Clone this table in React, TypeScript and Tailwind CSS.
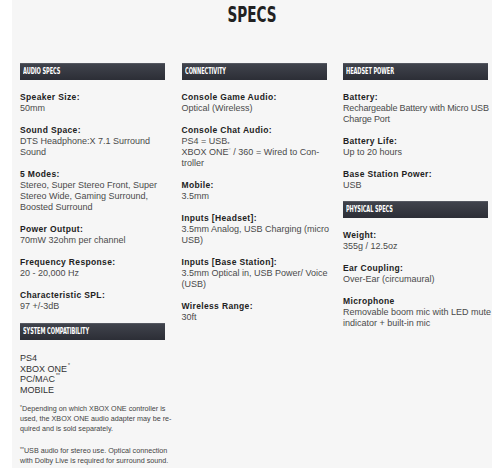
import React from "react";

const bodyFont = { fontFamily: '"Liberation Sans", Arial, sans-serif' };

function Bar({ title }: { title: string }) {
  return (
    <div className="h-[17px] w-[145px] bg-gradient-to-b from-[#40434c] to-[#2c2e36] border-t border-[#555861] flex items-center pl-[3px] overflow-hidden">
      <span
        className="inline-block origin-left scale-x-[0.7] text-white font-bold text-[8px] leading-none tracking-[-0.1px] whitespace-nowrap"
        style={{ fontFamily: '"DejaVu Sans Condensed", "DejaVu Sans", sans-serif' }}
      >
        {title}
      </span>
    </div>
  );
}

function Spec({ label, lines, tight }: { label: string; lines: React.ReactNode[]; tight?: boolean }) {
  return (
    <div className="mb-[11px]">
      <div className="text-[8.5px] leading-[11px] font-bold text-[#222] tracking-[0.35px] whitespace-nowrap">
        {label}
      </div>
      {lines.map((l, i) => (
        <div
          key={i}
          className={
            tight
              ? "text-[9px] leading-[11px] text-[#4a4a4a] whitespace-nowrap tracking-[-0.15px]"
              : "text-[9px] leading-[11px] text-[#4a4a4a] whitespace-nowrap"
          }
        >
          {l}
        </div>
      ))}
    </div>
  );
}

export default function App() {
  return (
    <div className="w-[500px] h-[474px] bg-white" style={bodyFont}>
      <div className="ml-[12px] w-[480px] h-[468px] bg-[#f6f6f6]">
        <div className="h-[63px] flex justify-center pt-[4px]">
          <div
            className="inline-block scale-x-[0.72] text-[21px] leading-[22px] font-bold text-[#222] h-[22px]"
            style={{ fontFamily: '"DejaVu Sans Condensed", "DejaVu Sans", sans-serif' }}
          >
            SPECS
          </div>
        </div>
        <div className="grid grid-cols-[145px_145px_145px] gap-x-[16.5px] pl-[8px]">
          {/* Left column */}
          <div className="flex flex-col">
            <Bar title="AUDIO SPECS" />
            <div className="h-[12px]" />
            <Spec label="Speaker Size:" lines={["50mm"]} />
            <Spec label="Sound Space:" lines={["DTS Headphone:X 7.1 Surround", "Sound"]} />
            <Spec
              label="5 Modes:"
              lines={["Stereo, Super Stereo Front, Super", "Stereo Wide, Gaming Surround,", "Boosted Surround"]}
            />
            <Spec label="Power Output:" lines={["70mW 32ohm per channel"]} />
            <Spec label="Frequency Response:" lines={["20 - 20,000 Hz"]} />
            <Spec label="Characteristic SPL:" lines={["97 +/-3dB"]} />
            <Bar title="SYSTEM COMPATIBILITY" />
            <div className="mt-[13px] text-[9px] leading-[10.5px] text-[#333]">
              <div className="h-[10.5px]">PS4</div>
              <div className="h-[10.5px] flex items-start">
                <span>XBOX ONE</span>
                <span className="text-[5px] leading-none ml-[1px] -mt-[1px]">*</span>
              </div>
              <div className="h-[10.5px] flex items-start">
                <span>PC/MAC</span>
                <span className="text-[5px] leading-none ml-[1px] -mt-[1px]">**</span>
              </div>
              <div className="h-[10.5px]">MOBILE</div>
            </div>
            <div className="mt-[9px] text-[7.2px] leading-[10px] text-[#444] whitespace-nowrap">
              <div>
                <sup className="text-[5px]">*</sup>Depending on which XBOX ONE controller is
              </div>
              <div>used, the XBOX ONE audio adapter may be re-</div>
              <div>quired and is sold separately.</div>
            </div>
            <div className="mt-[12px] text-[7.2px] leading-[10px] text-[#444] whitespace-nowrap">
              <div>
                <sup className="text-[5px]">**</sup>USB audio for stereo use. Optical connection
              </div>
              <div>with Dolby Live is required for surround sound.</div>
            </div>
          </div>

          {/* Middle column */}
          <div className="flex flex-col">
            <Bar title="CONNECTIVITY" />
            <div className="h-[12px]" />
            <Spec label="Console Game Audio:" lines={["Optical (Wireless)"]} />
            <Spec
              label="Console Chat Audio:"
              lines={[
                <span key="a">
                  PS4 = USB<sub className="text-[6px]">*</sub>
                </span>,
                <span key="b">
                  XBOX ONE<sup className="text-[6px] text-[#bbb]">*</sup> / 360 = Wired to Con-
                </span>,
                "troller",
              ]}
            />
            <Spec label="Mobile:" lines={["3.5mm"]} />
            <Spec label="Inputs [Headset]:" lines={["3.5mm Analog, USB Charging (micro", "USB)"]} />
            <Spec label="Inputs [Base Station]:" lines={["3.5mm Optical in, USB Power/ Voice", "(USB)"]} />
            <Spec label="Wireless Range:" lines={["30ft"]} />
          </div>

          {/* Right column */}
          <div className="flex flex-col">
            <Bar title="HEADSET POWER" />
            <div className="h-[12px]" />
            <Spec label="Battery:" tight lines={["Rechargeable Battery with Micro USB", "Charge Port"]} />
            <Spec label="Battery Life:" lines={["Up to 20 hours"]} />
            <Spec label="Base Station Power:" lines={["USB"]} />
            <div className="-mt-[1px]" />
            <Bar title="PHYSICAL SPECS" />
            <div className="h-[12px]" />
            <Spec label="Weight:" lines={["355g / 12.5oz"]} />
            <Spec label="Ear Coupling:" lines={["Over-Ear (circumaural)"]} />
            <Spec label="Microphone" lines={["Removable boom mic with LED mute", "indicator + built-in mic"]} />
          </div>
        </div>
      </div>
    </div>
  );
}
